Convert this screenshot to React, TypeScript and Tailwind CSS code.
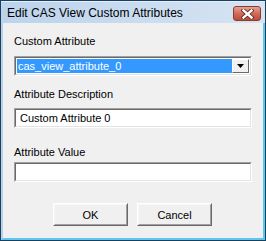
import React from "react";

// Classic Win32 sunken field (2px two-tone border)
function Sunken({ children, className = "" }: { children?: React.ReactNode; className?: string }) {
  return (
    <div className={`border border-t-[#a0a0a0] border-l-[#a0a0a0] border-r-white border-b-white ${className}`}>
      <div className="h-full border border-t-[#696969] border-l-[#696969] border-r-[#e3e3e3] border-b-[#e3e3e3] bg-white">
        {children}
      </div>
    </div>
  );
}

function Button({ label }: { label: string }) {
  return (
    <div className="w-[75px] h-[23px] border border-t-white border-l-white border-r-[#696969] border-b-[#696969]">
      <div className="h-full border border-t-[#f7f7f7] border-l-[#f7f7f7] border-r-[#a0a0a0] border-b-[#a0a0a0] bg-[#f0f0f0] flex items-center justify-center text-[11px] text-black">
        {label}
      </div>
    </div>
  );
}

export default function App() {
  return (
    <div
      className="w-[266px] h-[241px] flex flex-col bg-[#1c3f5e] p-px"
      style={{ fontFamily: '"Liberation Sans", Arial, sans-serif' }}
    >
      {/* Title bar */}
      <div className="h-[22px] flex items-center justify-between pl-[6px] pr-[4px] bg-gradient-to-r from-[#bcd3ec] to-[#d6e4f3] border-t border-t-[#e4eef9]">
        <span className="text-[12px] text-black leading-none">Edit CAS View Custom Attributes</span>
        <div className="w-[28px] h-[15px] mt-[2px] rounded-[3px] border border-[#8b3a30] bg-gradient-to-b from-[#e7a193] via-[#d06b5b] to-[#c04a3a] flex items-center justify-center">
          <svg width="13" height="10" viewBox="0 0 13 10">
            <path d="M2.5 1.5 L10.5 8.5 M10.5 1.5 L2.5 8.5" stroke="#5a2a24" strokeWidth="4.2" strokeLinecap="square" />
            <path d="M2.5 1.5 L10.5 8.5 M10.5 1.5 L2.5 8.5" stroke="#ffffff" strokeWidth="2.4" strokeLinecap="square" />
          </svg>
        </div>
      </div>

      {/* Frame + client area */}
      <div className="flex-1 flex flex-col border-l-2 border-r-2 border-b-2 border-l-[#b9d1ea] border-r-[#5cc6f2] border-b-[#5cc6f2]">
        <div className="flex-1 bg-[#f0f0f0] px-[11px] pt-[11px] text-[11px] text-black leading-[14px]">
          <div>Custom Attribute</div>
          <Sunken className="mt-[8px] h-[20px]">
            <div className="h-full flex items-stretch p-px">
              <div className="flex-1 bg-[#3399ff] text-white pl-[1px] flex items-center">cas_view_attribute_0</div>
              <div className="w-[17px] border border-t-white border-l-white border-r-[#696969] border-b-[#696969] bg-[#f0f0f0] flex items-center justify-center">
                <svg width="7" height="4" viewBox="0 0 7 4">
                  <path d="M0 0 H7 L3.5 4 Z" fill="#000" />
                </svg>
              </div>
            </div>
          </Sunken>

          <div className="mt-[11px]">Attribute Description</div>
          <Sunken className="mt-[7px] h-[20px]">
            <div className="h-full flex items-center pl-[4px]">Custom Attribute 0</div>
          </Sunken>

          <div className="mt-[17px]">Attribute Value</div>
          <Sunken className="mt-[3px] h-[20px]" />

          <div className="mt-[21px] flex justify-center gap-[9px] pr-[1px]">
            <Button label="OK" />
            <Button label="Cancel" />
          </div>
        </div>
      </div>
    </div>
  );
}
